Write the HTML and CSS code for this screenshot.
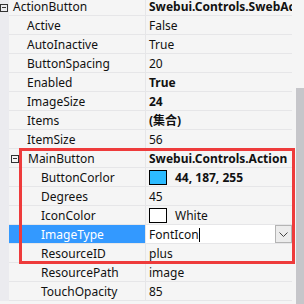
FILE: index.html
```html
<!DOCTYPE html>
<html>
<head>
<meta charset="utf-8">
<link rel="stylesheet" href="styles.css">
</head>
<body>
<div class="grid">
  <div class="rows">
    <div class="row first"><div class="gut"><span class="exp"></span></div><div class="name l0">ActionButton</div><div class="val b">Swebui.Controls.SwebActionButton</div></div>
    <div class="row"><div class="gut"></div><div class="name l1">Active</div><div class="val">False</div></div>
    <div class="row"><div class="gut"></div><div class="name l1">AutoInactive</div><div class="val">True</div></div>
    <div class="row"><div class="gut"></div><div class="name l1">ButtonSpacing</div><div class="val">20</div></div>
    <div class="row"><div class="gut"></div><div class="name l1">Enabled</div><div class="val b">True</div></div>
    <div class="row"><div class="gut"></div><div class="name l1">ImageSize</div><div class="val b">24</div></div>
    <div class="row"><div class="gut"></div><div class="name l1">Items</div><div class="val b">(集合)</div></div>
    <div class="row"><div class="gut"></div><div class="name l1">ItemSize</div><div class="val">56</div></div>
    <div class="row"><div class="gut"></div><div class="name l1c"><span class="exp"></span>MainButton</div><div class="val b">Swebui.Controls.Action</div></div>
    <div class="row"><div class="gut"></div><div class="name l2">ButtonCorlor</div><div class="val b"><span class="swatch blue"></span>44, 187, 255</div></div>
    <div class="row"><div class="gut"></div><div class="name l2">Degrees</div><div class="val">45</div></div>
    <div class="row"><div class="gut"></div><div class="name l2">IconColor</div><div class="val"><span class="swatch white"></span>White</div></div>
    <div class="row sel"><div class="gut"></div><div class="name l2">ImageType</div><div class="val edit"><span class="txt">FontIcon</span><span class="caret"></span><span class="drop"><svg width="9" height="5" viewBox="0 0 9 5"><polyline points="0.5,0.5 4.5,4.5 8.5,0.5" fill="none" stroke="#444" stroke-width="1"/></svg></span></div></div>
    <div class="row"><div class="gut"></div><div class="name l2">ResourceID</div><div class="val">plus</div></div>
    <div class="row"><div class="gut"></div><div class="name l2">ResourcePath</div><div class="val">image</div></div>
    <div class="row"><div class="gut"></div><div class="name l2">TouchOpacity</div><div class="val">85</div></div>
  </div>
  <div class="scroll"><div class="thumb"></div></div>
  <div class="mark"></div>
</div>
</body>
</html>
```
FILE: styles.css
```css
html, body {
  margin: 0;
  padding: 0;
  background: #f5f5f5;
}
.grid {
  position: relative;
  display: flex;
  width: 304px;
  height: 304px;
  overflow: hidden;
  font-family: "Noto Sans", "Noto Sans CJK SC", sans-serif;
  font-size: 12px;
  color: #111;
}
.rows {
  width: 292px;
  margin-top: -3px;
  display: flex;
  flex-direction: column;
}
.row {
  display: flex;
  height: 19px;
  flex: none;
}
.gut {
  width: 9px;
  flex: none;
  background: #ebebef;
  position: relative;
}
.name, .val {
  box-sizing: border-box;
  height: 19px;
  border-bottom: 1px solid #e6e6e8;
  padding-top: 1px;
  line-height: 17px;
  white-space: nowrap;
  overflow: hidden;
}
.name {
  width: 137px;
  flex: none;
  border-right: 1px solid #e6e6e8;
  display: flex;
  align-items: center;
}
.l0 { padding-left: 4px; }
.l1 { padding-left: 18px; }
.l1c { padding-left: 2px; }
.l2 { padding-left: 32px; }
.val {
  flex: 1;
  min-width: 0;
  padding-left: 3px;
  display: flex;
  align-items: center;
}
.b { font-weight: 700; }
.exp {
  box-sizing: border-box;
  width: 8px;
  height: 8px;
  border: 1px solid #333;
  position: relative;
  flex: none;
}
.exp::after {
  content: "";
  position: absolute;
  left: 1px;
  top: 2px;
  width: 4px;
  height: 1px;
  background: #333;
}
.gut .exp {
  display: block;
  margin-top: 7px;
  margin-left: 0;
}
.l1c .exp {
  margin-right: 9px;
}
.swatch {
  box-sizing: border-box;
  width: 18px;
  height: 15px;
  border: 1px solid #000;
  margin-right: 8px;
  margin-top: -1px;
  flex: none;
}
.swatch.blue { background: rgb(44, 187, 255); }
.swatch.white { background: #fff; }
.sel .name {
  background: #3399ff;
  color: #fff;
}
.edit {
  background: #fff;
  padding-right: 0;
}
.caret {
  width: 1px;
  height: 14px;
  background: #000;
  flex: none;
}
.txt { flex: none; }
.drop {
  margin-left: auto;
  box-sizing: border-box;
  width: 17px;
  height: 18px;
  margin-top: -1px;
  border: 1px solid #b4b4b4;
  background: #ececec;
  display: flex;
  align-items: center;
  justify-content: center;
  flex: none;
}
.scroll {
  width: 12px;
  flex: none;
  background: #f5f5f5;
  padding-left: 4px;
  box-sizing: border-box;
}
.thumb {
  margin-top: 88px;
  height: 216px;
  background: #c6c6ca;
}
.mark {
  position: absolute;
  left: 19px;
  top: 148px;
  width: 276px;
  height: 116px;
  box-sizing: border-box;
  border: 3px solid #ee3b3b;
}
```
